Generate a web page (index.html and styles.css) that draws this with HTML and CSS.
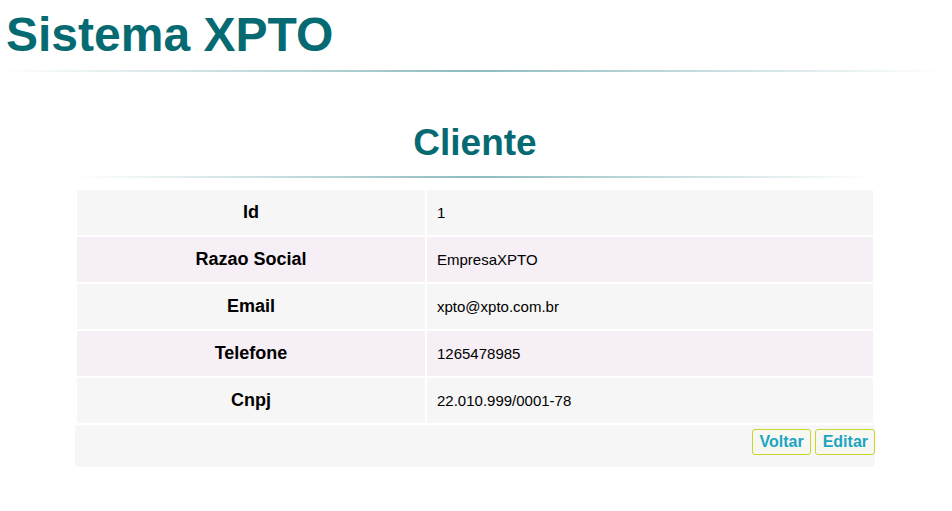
FILE: index.html
```html
<!DOCTYPE html>
<html lang="pt-BR">
<head>
<meta charset="utf-8">
<title>Sistema XPTO</title>
<link rel="stylesheet" href="styles.css">
</head>
<body>
<header class="site-header">
  <h1 class="site-title">Sistema XPTO</h1>
  <hr class="fade-rule">
</header>
<main class="content">
  <h2 class="page-title">Cliente</h2>
  <hr class="fade-rule">
  <table class="detail-table">
    <tbody>
      <tr><th>Id</th><td>1</td></tr>
      <tr><th>Razao Social</th><td>EmpresaXPTO</td></tr>
      <tr><th>Email</th><td>xpto@xpto.com.br</td></tr>
      <tr><th>Telefone</th><td>1265478985</td></tr>
      <tr><th>Cnpj</th><td>22.010.999/0001-78</td></tr>
    </tbody>
  </table>
  <div class="actions">
    <button class="btn" type="button">Voltar</button>
    <button class="btn" type="button">Editar</button>
  </div>
</main>
</body>
</html>
```
FILE: styles.css
```css
html, body {
  margin: 0;
  padding: 0;
  background: #ffffff;
  font-family: "Liberation Sans", Arial, sans-serif;
  color: #000;
}

.site-header {
  padding: 7px 8px 0 0;
}

.site-title {
  margin: 0 0 0 6px;
  font-size: 48px;
  line-height: 55px;
  font-weight: bold;
  color: #066a72;
}

.fade-rule {
  border: 0;
  height: 2px;
  margin: 0;
  background: linear-gradient(to right, rgba(6, 106, 114, 0), rgba(6, 106, 114, 0.45), rgba(6, 106, 114, 0));
}

.site-header .fade-rule {
  margin-top: 8px;
}

.content {
  width: 800px;
  margin: 0 auto;
  box-sizing: border-box;
  transform: translateX(-1px);
}

.page-title {
  margin: 50px 0 0;
  text-align: center;
  font-size: 37px;
  line-height: 42px;
  font-weight: bold;
  color: #066a72;
}

.content .fade-rule {
  margin-top: 12px;
  height: 2px;
}

.detail-table {
  width: 800px;
  margin-top: 10px;
  border-collapse: separate;
  border-spacing: 2px;
  background: #ffffff;
}

.detail-table tr {
  height: 45px;
}

.detail-table th {
  width: 348px;
  font-size: 18px;
  font-weight: bold;
  text-align: center;
  padding: 0;
}

.detail-table td {
  font-size: 15px;
  text-align: left;
  padding: 0 10px;
}

.detail-table tr:nth-child(odd) th,
.detail-table tr:nth-child(odd) td {
  background: #f6f6f6;
}

.detail-table tr:nth-child(even) th,
.detail-table tr:nth-child(even) td {
  background: #f6eff6;
}

.actions {
  display: flex;
  justify-content: flex-end;
  gap: 4px;
  background: #f6f6f6;
  padding: 4px 0 12px;
  border-radius: 0 0 5px 5px;
}

.btn {
  font-family: "Liberation Sans", Arial, sans-serif;
  font-size: 16px;
  font-weight: bold;
  color: #1da4c4;
  background: #f7f8f2;
  border: 1px solid #c9d62b;
  border-radius: 3px;
  height: 26px;
  padding: 0 6px 0 7px;
  line-height: 24px;
  cursor: pointer;
}
```
